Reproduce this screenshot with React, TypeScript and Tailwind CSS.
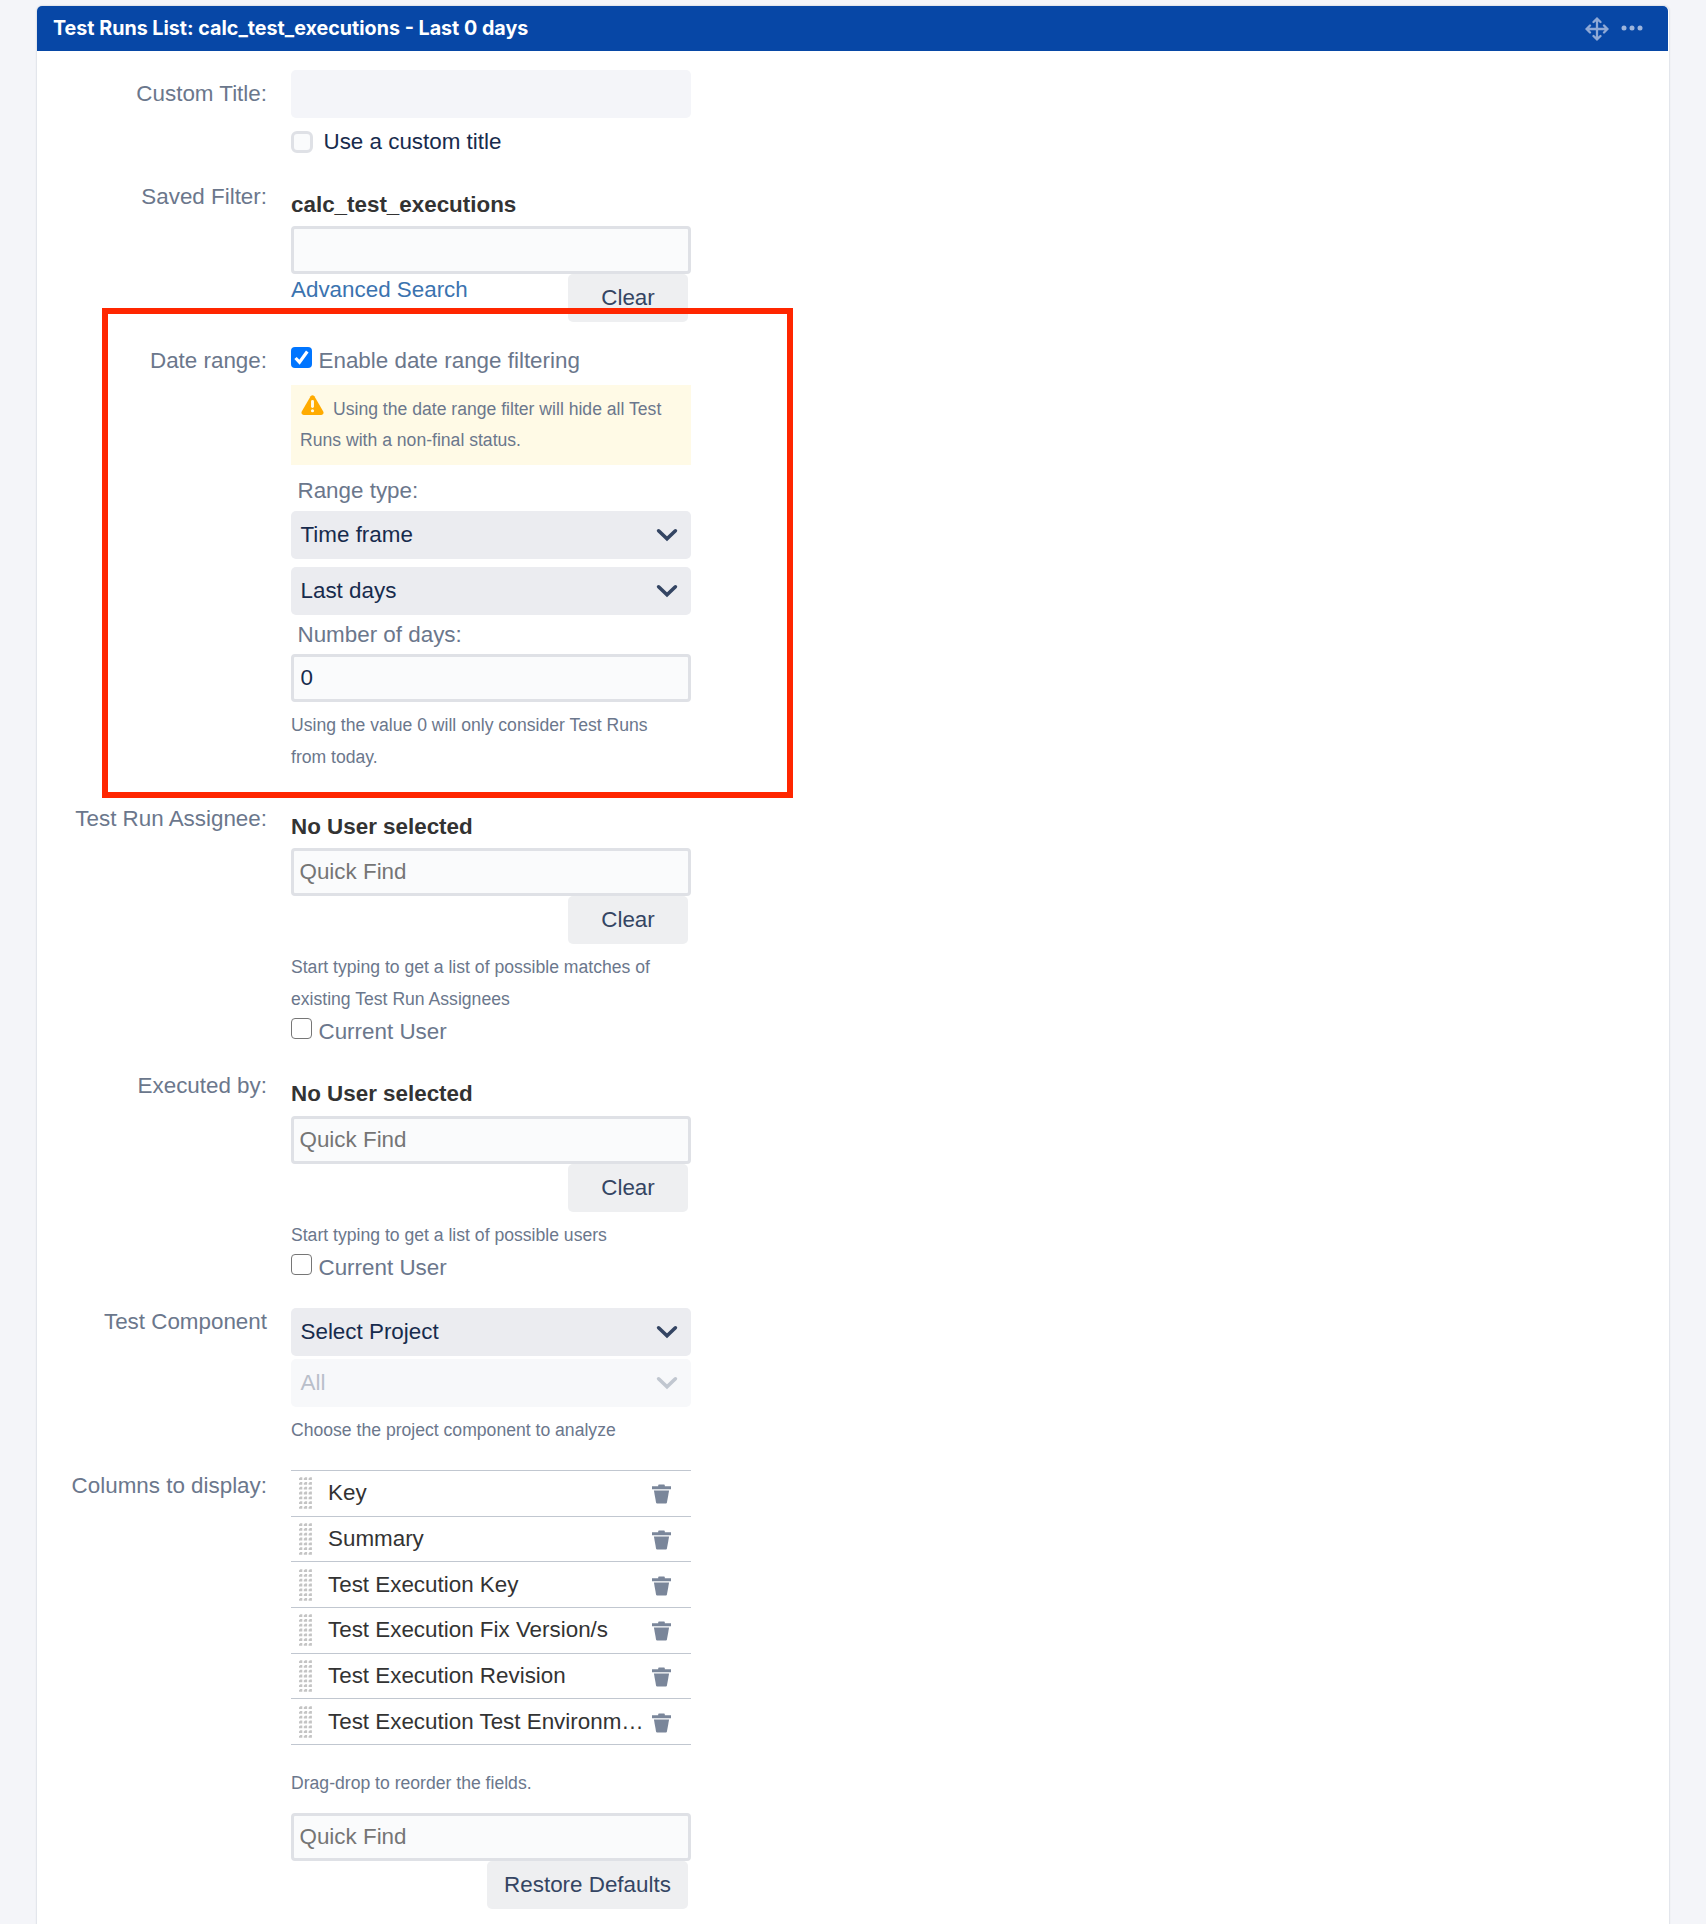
import { useState } from 'react';
import type { ReactNode } from 'react';

const COLUMNS = [
  'Key',
  'Summary',
  'Test Execution Key',
  'Test Execution Fix Version/s',
  'Test Execution Revision',
  'Test Execution Test Environm…',
];

function Field({ label, className = '', labelClass = 'pt-px', children }: { label: string; className?: string; labelClass?: string; children: ReactNode }) {
  return (
    <div className={`flex gap-6 ${className}`}>
      <div className={`w-[230px] shrink-0 text-right text-[#6b778c] ${labelClass}`}>{label}</div>
      <div className="w-[400px]">{children}</div>
    </div>
  );
}

function TextInput({ placeholder, defaultValue, className = '' }: { placeholder?: string; defaultValue?: string; className?: string }) {
  return (
    <input
      type="text"
      placeholder={placeholder}
      defaultValue={defaultValue}
      className={`block h-12 w-full rounded-[4px] border-[3px] border-[#dfe1e6] bg-[#fafbfc] text-[#172b4d] outline-none placeholder:text-[#757575] ${className}`}
    />
  );
}

function Select({ value, disabled = false, className = '' }: { value: string; disabled?: boolean; className?: string }) {
  return (
    <button
      disabled={disabled}
      className={`flex h-12 w-full items-center justify-between rounded-[5px] bg-[#ebecf0] pr-[13px] pl-[9.500px] text-[#172b4d] disabled:bg-[#f7f8fa] disabled:text-[#b9bfca] ${className}`}
    >
      <span>{value}</span>
      <svg width="22" height="14" viewBox="0 0 22 14" fill="none" className={disabled ? 'text-[#c1c7d0]' : 'text-[#344563]'}>
        <path d="M2.600 2.800 11 10.800l8.400-8" stroke="currentColor" strokeWidth="3.600" strokeLinecap="round" />
      </svg>
    </button>
  );
}

function ClearButton({ children, className = 'w-[120px]' }: { children: ReactNode; className?: string }) {
  return (
    <button className={`mr-[3px] ml-auto block h-12 rounded-[5px] bg-[#eeeff1] text-[#344563] ${className}`}>
      {children}
    </button>
  );
}

function Help({ children, className = '' }: { children: ReactNode; className?: string }) {
  return <div className={`text-[17.600px] text-[#6b778c] ${className}`}>{children}</div>;
}

function Check({ label, defaultChecked = false }: { label: string; defaultChecked?: boolean }) {
  const [checked, setChecked] = useState(defaultChecked);
  return (
    <label className="flex h-8 gap-[6.500px] text-[#6b778c]">
      <span className={`mt-[3px] flex size-[21px] items-center justify-center rounded-[4px] ${checked ? 'bg-[#0075ff]' : 'border-[1.500px] border-[#767676] bg-white'}`}>
        <input type="checkbox" className="sr-only" checked={checked} onChange={() => setChecked(!checked)} />
        {checked && (
          <svg width="21" height="21" viewBox="0 0 21 21" fill="none">
            <path d="m4.500 11 4 4.200L16.300 4.500" stroke="#fff" strokeWidth="3.200" />
          </svg>
        )}
      </span>
      <span className="pt-px">{label}</span>
    </label>
  );
}

// drag handle, 7 x 3 dots
function Grip() {
  return (
    <svg width="13" height="32" viewBox="0 0 13 32" className="shrink-0">
      {[0, 1, 2, 3, 4, 5, 6].map(r =>
        [0, 1, 2].map(c => (
          <path key={`${r}-${c}`} d={`M${c * 4.8} ${r * 4.8 + 3}v-1.600l1.300-1.200h2v2.800z`} fill="#c4c4c4" />
        )),
      )}
    </svg>
  );
}

function Trash() {
  return (
    <svg width="19" height="20" viewBox="0 0 19 20" fill="#7a869a" className="shrink-0">
      <path d="M0 2.300h6.200V1.300q0-.8.800-.8h5q.8 0 .8.800v1H19v2.900H0z" />
      <path d="M1.900 6.500h15.200l-2.200 12.200q-.2.800-1 .8H5.100q-.8 0-1-.8z" />
    </svg>
  );
}

export default function App() {
  return (
    <div className="h-[1924px] overflow-hidden bg-[#f4f5f9] pt-[6px] pl-[37px] font-['Liberation_Sans',Arial,sans-serif] text-[22.400px] leading-8">
      <div className="relative h-[1940px] w-[1632px] rounded-t-[5px] bg-white shadow-[0_0_2px_rgba(9,30,66,0.25)]">
        <header className="flex h-[45px] w-[1631px] items-center rounded-t-[5px] bg-[#0747a6] pl-4">
          <h1 className="-mt-[2px] font-['Inter',sans-serif] text-[19.700px] font-bold text-white">
            Test Runs List: calc_test_executions - Last 0 days
          </h1>
          <svg width="24" height="24" viewBox="0 0 24 24" fill="none" stroke="#8fa9d6" strokeWidth="2.300" strokeLinecap="round" className="mr-3 ml-auto">
            <path d="M12 2v20M2 12h20M8.500 5 12 1.600 15.500 5M8.500 19l3.500 3.400 3.500-3.400M5 8.500 1.600 12 5 15.500M19 8.500l3.400 3.500-3.400 3.500" />
          </svg>
          <svg width="22" height="6" viewBox="0 0 22 6" fill="#9db5dc" className="mr-[25px] mb-[2px]">
            <circle cx="3" cy="3" r="2.500" />
            <circle cx="11" cy="3" r="2.500" />
            <circle cx="19" cy="3" r="2.500" />
          </svg>
        </header>

        <Field label="Custom Title:" className="mt-[19px] h-[110px]" labelClass="pt-2">
          <div className="h-12 rounded-[5px] bg-[#f4f5f9]" />
          <label className="mt-2 flex gap-[10.500px] text-[#172b4d]">
            <input type="checkbox" className="mt-[5px] size-[22px] appearance-none rounded-[6px] border-[3px] border-[#dfe1e6] bg-[#fafbfc]" />
            Use a custom title
          </label>
        </Field>

        <Field label="Saved Filter:" className="h-[164px]">
          <div className="mt-[9px] mb-[5px] font-bold text-[#333]">calc_test_executions</div>
          <TextInput />
          <div className="flex items-start">
            <a className="text-[#3b73af]">Advanced Search</a>
            <ClearButton>Clear</ClearButton>
          </div>
        </Field>

        <Field label="Date range:" className="h-[458px]">
          <Check label="Enable date range filtering" defaultChecked />
          <div className="mt-[9px] h-20 bg-[#fffae6] px-[9px] pt-[9px] text-[17.600px] leading-[31px] text-[#6b778c]">
            <svg width="23" height="20" viewBox="0 0 22 19" className="mr-[9px] ml-px inline-block align-baseline">
              <path d="M9.200 1.200q1.800-2.200 3.600 0l8.500 14.600q1 2.700-1.800 3.200h-17q-2.800-.5-1.800-3.200z" fill="#ffab00" />
              <path d="M11 6v5" stroke="#fffae6" strokeWidth="2.800" strokeLinecap="round" />
              <circle cx="11" cy="15" r="1.500" fill="#fffae6" />
            </svg>
            Using the date range filter will hide all Test Runs with a non-final status.
          </div>
          <div className="mt-[10px] mb-1 pl-[6.500px] text-[#6b778c]">Range type:</div>
          <Select value="Time frame" />
          <Select value="Last days" className="mt-2" />
          <div className="mt-1 mb-[3px] pl-[6.500px] text-[#6b778c]">Number of days:</div>
          <TextInput defaultValue="0" className="px-[6.500px]" />
          <Help className="mt-[7px] w-[370px]">Using the value 0 will only consider Test Runs from today.</Help>
        </Field>

        <Field label="Test Run Assignee:" className="h-[267px]">
          <div className="mt-[9px] mb-[5px] font-bold text-[#333]">No User selected</div>
          <TextInput placeholder="Quick Find" className="px-[5.500px]" />
          <ClearButton>Clear</ClearButton>
          <Help className="mt-[7px] w-[380px]">Start typing to get a list of possible matches of existing Test Run Assignees</Help>
          <Check label="Current User" />
        </Field>

        <Field label="Executed by:" className="h-[236px]">
          <div className="mt-[9px] mb-[6px] font-bold text-[#333]">No User selected</div>
          <TextInput placeholder="Quick Find" className="px-[5.500px]" />
          <ClearButton className="w-[120px] pb-px">Clear</ClearButton>
          <Help className="mt-[7px]">Start typing to get a list of possible users</Help>
          <Check label="Current User" />
        </Field>

        <Field label="Test Component" className="h-[164px]">
          <Select value="Select Project" className="mt-[3px]" />
          <Select value="All" disabled className="mt-[3px]" />
          <Help className="mt-[7px]">Choose the project component to analyze</Help>
        </Field>

        <Field label="Columns to display:">
          <ul className="mt-px border-t border-[#c1c7d0]">
            {COLUMNS.map(name => (
              <li key={name} className="flex h-[45.700px] items-center border-b border-[#c1c7d0] pl-2">
                <Grip />
                <span className="ml-4 w-[318px] whitespace-nowrap text-[#333]">{name}</span>
                <span className="mt-[2px] ml-[6px]"><Trash /></span>
              </li>
            ))}
          </ul>
          <Help className="mt-[22px] mb-[14px]">Drag-drop to reorder the fields.</Help>
          <TextInput placeholder="Quick Find" className="px-[5.500px]" />
          <ClearButton className="w-[201px]">Restore Defaults</ClearButton>
        </Field>

        {/* highlight around the date range section */}
        <div className="pointer-events-none absolute top-[302px] left-[65px] h-[490px] w-[691px] border-[6px] border-[#ff2600]" />
      </div>
    </div>
  );
}
